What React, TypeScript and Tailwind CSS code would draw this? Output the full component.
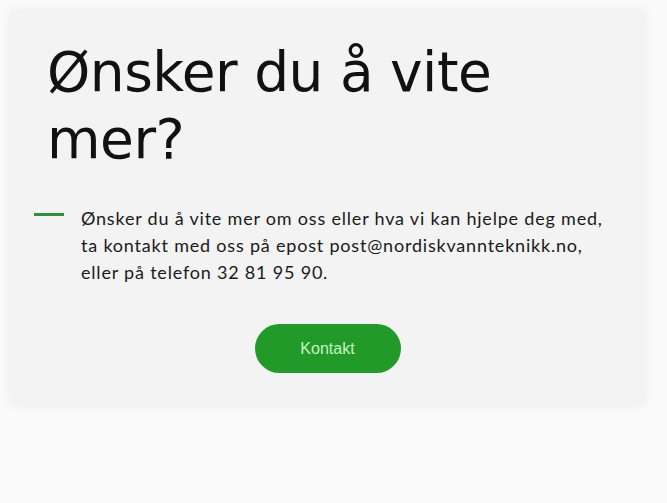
export default function App() {
  return (
    <div className="min-h-[503px] w-full bg-[#fafafa] pt-[10px] pl-[10px] pr-[22px]">
      <div className="bg-[#f3f3f3] shadow-[0_0_12px_rgba(0,0,0,0.06)] h-[395px] pt-[29px]">
        <h1 className="ml-[37px] text-[55px] leading-[67px] text-[#111] font-normal font-['DejaVu_Sans',sans-serif] tracking-[-0.5px]">
          Ønsker du å vite
          <br />
          mer?
        </h1>
        <div className="flex mt-[32px] ml-[24px]">
          <div className="w-[30px] h-[3px] bg-[#2f8f3a] mt-[8px] shrink-0" />
          <p className="ml-[17px] text-[18px] leading-[27px] tracking-[0.8px] text-[#1a1a1a] font-['Lato',sans-serif]">
            Ønsker du å vite mer om oss eller hva vi kan hjelpe deg med,
            <br />
            ta kontakt med oss på epost post@nordiskvannteknikk.no,
            <br />
            eller på telefon 32 81 95 90.
          </p>
        </div>
        <div className="flex justify-center mt-[38px]">
          <button className="w-[146px] h-[49px] rounded-full bg-[#229a2a] text-[#c8f5c0] text-[16px] font-['Liberation_Sans',sans-serif]">
            Kontakt
          </button>
        </div>
      </div>
    </div>
  );
}
